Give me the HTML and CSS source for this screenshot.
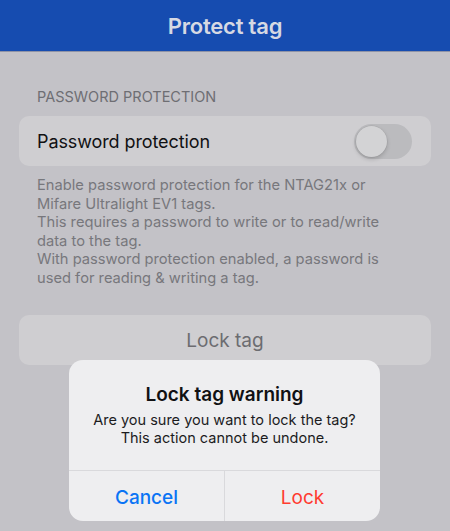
FILE: index.html
```html
<!DOCTYPE html>
<html lang="en">
<head>
    <meta charset="UTF-8">
    <meta name="viewport" content="width=device-width, initial-scale=1.0">
    <title>Protect tag</title>
    <link rel="stylesheet" href="styles.css">
</head>
<body>
    <div class="screen">
        <div class="nav-bar">
            <div class="nav-title">Protect tag</div>
        </div>

        <div class="content">
            <div class="section-label">PASSWORD PROTECTION</div>
            <div class="card">
                <span class="card-label">Password protection</span>
                <div class="switch"></div>
            </div>
            <div class="footnote">
                Enable password protection for the NTAG21x or<br>
                Mifare Ultralight EV1 tags.<br>
                This requires a password to write or to read/write<br>
                data to the tag.<br>
                With password protection enabled, a password is<br>
                used for reading &amp; writing a tag.
            </div>
            <button class="lock-button">Lock tag</button>
        </div>

        <div class="alert">
            <div class="alert-body">
                <div class="alert-title">Lock tag warning</div>
                <div class="alert-message">Are you sure you want to lock the tag?<br>This action cannot be undone.</div>
            </div>
            <div class="alert-actions">
                <button class="alert-button cancel">Cancel</button>
                <button class="alert-button destructive">Lock</button>
            </div>
        </div>
    </div>
</body>
</html>
```

FILE: styles.css
```css
body {
    margin: 0;
    padding: 0;
    width: 450px;
    height: 531px;
    overflow: hidden;
    background: #c3c2c7;
    font-family: Inter, 'Noto Sans', sans-serif;
    -webkit-font-smoothing: antialiased;
}

.screen {
    position: relative;
    height: 531px;
}

.nav-bar {
    height: 52px;
    background: #164cb0;
    border-bottom: 1px solid #8f93a6;
    box-sizing: border-box;
    display: flex;
    align-items: center;
    justify-content: center;
}

.nav-title {
    color: #d6d9e3;
    font-size: 22px;
    font-weight: 600;
    letter-spacing: -0.2px;
}

.content {
    padding: 0 19px;
}

.section-label {
    margin: 36px 18px 0;
    font-size: 14.5px;
    line-height: 17px;
    color: #6e6e73;
}

.card {
    margin-top: 11px;
    height: 50px;
    border-radius: 10px;
    background: #cfced1;
    display: flex;
    align-items: center;
    justify-content: space-between;
    padding: 0 19px 0 18px;
}

.card-label {
    font-size: 18px;
    color: #111113;
    letter-spacing: -0.1px;
}

.switch {
    position: relative;
    width: 58px;
    height: 35px;
    border-radius: 18px;
    background: #bbbbbe;
}

.switch::after {
    content: '';
    position: absolute;
    top: 2px;
    left: 2px;
    width: 31px;
    height: 31px;
    border-radius: 50%;
    background: #d3d3d5;
    box-shadow: 0 2px 4px rgba(0, 0, 0, 0.18), 0 0 0 0.5px rgba(0, 0, 0, 0.08);
}

.footnote {
    margin-top: 10px;
    padding: 0 18px;
    font-size: 14.7px;
    line-height: 18.5px;
    color: #77777c;
}

.lock-button {
    display: block;
    width: 100%;
    margin-top: 28px;
    height: 50px;
    border: none;
    border-radius: 10px;
    background: #cfced1;
    font-family: inherit;
    font-size: 19px;
    color: #6c6c70;
}

.alert {
    position: absolute;
    left: 69px;
    top: 360px;
    width: 311px;
    height: 161px;
    border-radius: 14px;
    background: #eeeef0;
    overflow: hidden;
    display: flex;
    flex-direction: column;
}

.alert-body {
    flex: 1;
    padding-top: 23px;
    text-align: center;
}

.alert-title {
    font-size: 19px;
    line-height: 24px;
    font-weight: 600;
    color: #111113;
}

.alert-message {
    margin-top: 4px;
    font-size: 14.5px;
    line-height: 17.5px;
    color: #1c1c1e;
}

.alert-actions {
    height: 50px;
    display: flex;
    border-top: 1px solid #d9d9dc;
}

.alert-button {
    flex: 1;
    border: none;
    background: transparent;
    font-family: inherit;
    font-size: 19px;
    padding: 2px 0 0;
}

.alert-button + .alert-button {
    border-left: 1px solid #d9d9dc;
}

.cancel {
    color: #0a74f5;
    font-weight: 500;
}

.destructive {
    color: #ff3b30;
}
```
